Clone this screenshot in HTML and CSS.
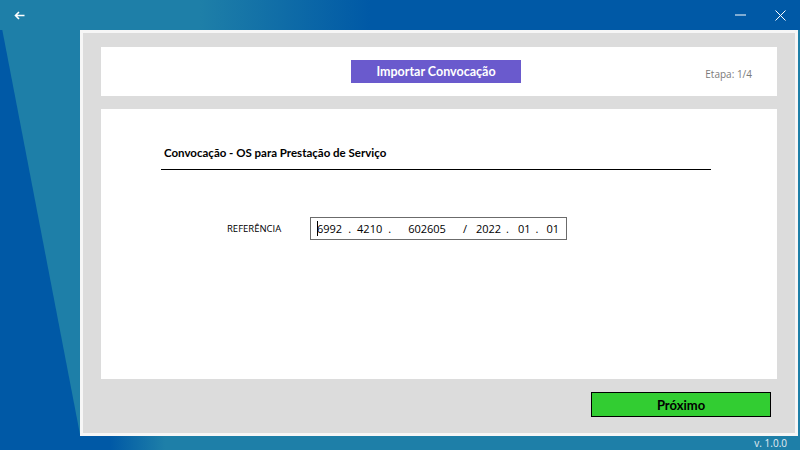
FILE: index.html
```html
<!DOCTYPE html>
<html lang="pt-BR">
<head>
<meta charset="utf-8">
<title>Importar Convocação</title>
<link rel="stylesheet" href="styles.css">
</head>
<body>
<div class="app">
  <header class="titlebar">
    <button class="icon-btn back" aria-label="Voltar">
      <svg width="11" height="9" viewBox="0 0 11 9"><path d="M10.5 4.5H1.5M5 1L1.5 4.5L5 8" fill="none" stroke="#fff" stroke-width="1.6"/></svg>
    </button>
    <div class="win-controls">
      <button class="icon-btn" aria-label="Minimizar">
        <svg width="11" height="2" viewBox="0 0 11 2"><path d="M0 1H11" stroke="#fff" stroke-width="1"/></svg>
      </button>
      <button class="icon-btn" aria-label="Fechar">
        <svg width="11" height="11" viewBox="0 0 11 11"><path d="M0.5 0.5L10.5 10.5M10.5 0.5L0.5 10.5" stroke="#fff" stroke-width="1"/></svg>
      </button>
    </div>
  </header>

  <main class="panel">
    <section class="card head">
      <div></div>
      <div class="import">Importar Convocação</div>
      <div class="step">Etapa: 1/4</div>
    </section>

    <section class="card main">
      <div class="form">
        <h2 class="form-title">Convocação - OS para Prestação de Serviço</h2>
        <div class="row">
          <label class="label">REFERÊNCIA</label>
          <div class="mask">
            <span class="caret"></span><span class="seg">6992</span><span class="seg s6">.</span><span class="seg s6">4210</span><span class="seg s6">.</span><span class="seg s17">602605</span><span class="seg s17">/</span><span class="seg s9">2022</span><span class="seg s5">.</span><span class="seg s9">01</span><span class="seg s5">.</span><span class="seg s8">01</span>
          </div>
        </div>
      </div>
    </section>

    <div class="actions">
      <button class="next">Próximo</button>
    </div>
  </main>

  <footer class="statusbar">v. 1.0.0</footer>
</div>
</body>
</html>
```

FILE: styles.css
```css
html, body {
  margin: 0;
  padding: 0;
}

body {
  width: 800px;
  height: 450px;
  overflow: hidden;
  background: #1e7fa8;
  font-family: "Open Sans", "Noto Sans", sans-serif;
  position: relative;
}

body::before {
  content: "";
  position: fixed;
  inset: 0;
  background: #0059a6;
  clip-path: polygon(0 18px, 83px 450px, 0 450px);
}

.app {
  position: relative;
  z-index: 1;
  display: flex;
  flex-direction: column;
  height: 450px;
}

.titlebar {
  height: 30px;
  flex: none;
  display: flex;
  align-items: center;
  justify-content: space-between;
  background: linear-gradient(to right, #1e7fa8 200px, #0059a6 370px);
}

.icon-btn {
  border: 0;
  background: none;
  padding: 0;
  display: flex;
  align-items: center;
  justify-content: center;
  cursor: pointer;
}

.back {
  margin-left: 14px;
}

.win-controls {
  display: flex;
  align-items: center;
  gap: 29px;
  margin-right: 14px;
}

.panel {
  margin-left: 80px;
  width: 718px;
  height: 406px;
  flex: none;
  box-sizing: border-box;
  border: 3px solid #f6f6f6;
  background: #dcdcdc;
  padding: 14px 18px 0;
  display: flex;
  flex-direction: column;
  gap: 13px;
}

.card {
  background: #fff;
}

.card.head {
  height: 49px;
  flex: none;
  display: grid;
  grid-template-columns: 1fr auto 1fr;
  align-items: center;
}

.import {
  width: 170px;
  height: 23px;
  margin-right: 6px;
  background: #6a5acd;
  color: #fff;
  font-family: "Lato", "Open Sans", sans-serif;
  font-weight: 700;
  font-size: 12.5px;
  display: flex;
  align-items: center;
  justify-content: center;
}

.step {
  justify-self: end;
  padding-right: 25px;
  margin-top: 5px;
  font-size: 10px;
  color: #7a7a7a;
}

.card.main {
  height: 270px;
  flex: none;
  padding-left: 60px;
  box-sizing: border-box;
}

.form {
  width: 550px;
  padding-top: 36px;
}

.form-title {
  margin: 0;
  padding: 0 0 8px 3px;
  font-family: "Lato", "Open Sans", sans-serif;
  font-size: 11.5px;
  line-height: 16px;
  font-weight: 700;
  color: #000;
  border-bottom: 1px solid #000;
}

.row {
  display: flex;
  align-items: center;
  margin-top: 47px;
  padding-left: 66px;
}

.label {
  width: 83px;
  font-size: 9.5px;
  color: #000;
}

.mask {
  width: 257px;
  height: 23px;
  box-sizing: border-box;
  border: 1px solid #6b6b6b;
  display: flex;
  align-items: center;
  padding-left: 6px;
  font-size: 11px;
  color: #000;
  white-space: pre;
}

.caret {
  width: 0;
  height: 15px;
  border-left: 1px solid #000;
  margin-right: -1px;
}

.s5 { margin-left: 5px; }
.s6 { margin-left: 6px; }
.s8 { margin-left: 8px; }
.s9 { margin-left: 9px; }
.s17 { margin-left: 17px; }

.actions {
  display: flex;
  justify-content: flex-end;
  padding-right: 6px;
}

.next {
  width: 180px;
  height: 25px;
  box-sizing: border-box;
  background: #32cd32;
  border: 1px solid #000;
  font-family: "Lato", "Open Sans", sans-serif;
  font-weight: 700;
  font-size: 13px;
  color: #000;
  padding: 0;
  cursor: pointer;
}

.statusbar {
  flex: 1;
  display: flex;
  align-items: center;
  justify-content: flex-end;
  padding-right: 13px;
  font-size: 10px;
  color: #e6eef4;
  background: linear-gradient(to right, #0059a6 110px, #1e7fa8 165px);
}
```
